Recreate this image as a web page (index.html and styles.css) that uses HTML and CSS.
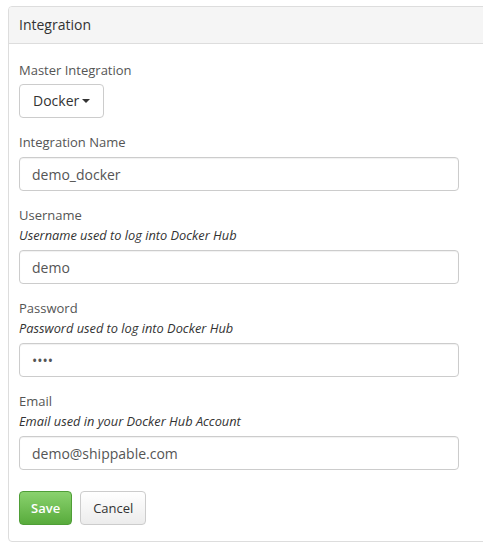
FILE: index.html
```html
<!DOCTYPE html>
<html>
<head>
<meta charset="utf-8">
<link rel="stylesheet" href="styles.css">
</head>
<body>
<div class="page">
  <div class="panel">
    <div class="panel-heading">Integration</div>
    <div class="panel-body">
      <div class="group group-first">
        <div class="label">Master Integration</div>
        <button class="btn btn-default btn-drop" type="button">Docker <span class="caret"></span></button>
      </div>
      <div class="group">
        <div class="label">Integration Name</div>
        <input class="control" type="text" value="demo_docker">
      </div>
      <div class="group">
        <div class="label">Username</div>
        <div class="help">Username used to log into Docker Hub</div>
        <input class="control" type="text" value="demo">
      </div>
      <div class="group">
        <div class="label">Password</div>
        <div class="help">Password used to log into Docker Hub</div>
        <input class="control" type="password" value="demo">
      </div>
      <div class="group">
        <div class="label">Email</div>
        <div class="help">Email used in your Docker Hub Account</div>
        <input class="control" type="text" value="demo@shippable.com">
      </div>
      <div class="actions">
        <button class="btn btn-success" type="button">Save</button>
        <button class="btn btn-default" type="button">Cancel</button>
      </div>
    </div>
  </div>
</div>
</body>
</html>
```

FILE: styles.css
```css
html, body {
  margin: 0;
  padding: 0;
  background: #fff;
}
body {
  font-family: "Open Sans", "Liberation Sans", sans-serif;
  font-size: 14px;
  line-height: 20px;
  color: #333;
  overflow: hidden;
}
.page {
  padding: 6px 0 0 8px;
}
.panel {
  width: 520px;
  border: 1px solid #ddd;
  border-radius: 4px;
  background: #fff;
}
.panel-heading {
  background: #f5f5f5;
  border-bottom: 1px solid #ddd;
  padding: 8px 10px;
  border-radius: 3px 3px 0 0;
  color: #333;
}
.panel-body {
  padding: 16px 10px 16px;
}
.group {
  display: flex;
  flex-direction: column;
  align-items: flex-start;
  margin-top: 14px;
}
.group-first {
  margin-top: 0;
}
.group-first .label {
  margin-bottom: 4px;
}
.label {
  font-size: 13px;
  color: #555;
  margin-bottom: 5px;
}
.label + .help {
  margin-top: -5px;
  margin-bottom: 5px;
}
.help {
  font-style: italic;
  font-size: 12.8px;
  line-height: 20px;
  color: #333;
}
.control {
  box-sizing: border-box;
  width: 440px;
  height: 34px;
  border: 1px solid #ccc;
  border-radius: 4px;
  padding: 6px 12px;
  font-family: "Open Sans", "Liberation Sans", sans-serif;
  font-size: 14px;
  color: #555;
  background: #fff;
  box-shadow: inset 0 1px 1px rgba(0,0,0,0.06);
  margin: 0;
  outline: none;
}
.btn {
  box-sizing: border-box;
  height: 34px;
  border-radius: 4px;
  font-family: "Open Sans", "Liberation Sans", sans-serif;
  font-size: 13px;
  line-height: 20px;
  padding: 6px 12px;
  margin: 0;
  cursor: pointer;
  display: inline-flex;
  align-items: center;
}
.btn-default {
  background: linear-gradient(#fff, #ececec);
  border: 1px solid #ccc;
  color: #333;
}
.btn-drop {
  background: #fff;
  padding: 6px 13px 6px 13px;
  color: #333;
  font-size: 14px;
}
.caret {
  display: inline-block;
  width: 0;
  height: 0;
  margin-left: 3px;
  border-top: 4px solid #333;
  border-left: 4px solid transparent;
  border-right: 4px solid transparent;
}
.btn-success {
  background: linear-gradient(#8ad26e, #58ab3c);
  border: 1px solid #4f9e37;
  color: #fff;
  font-weight: 600;
  padding: 6px 11px;
}
.actions {
  display: flex;
  gap: 8px;
  margin-top: 21px;
}
```
